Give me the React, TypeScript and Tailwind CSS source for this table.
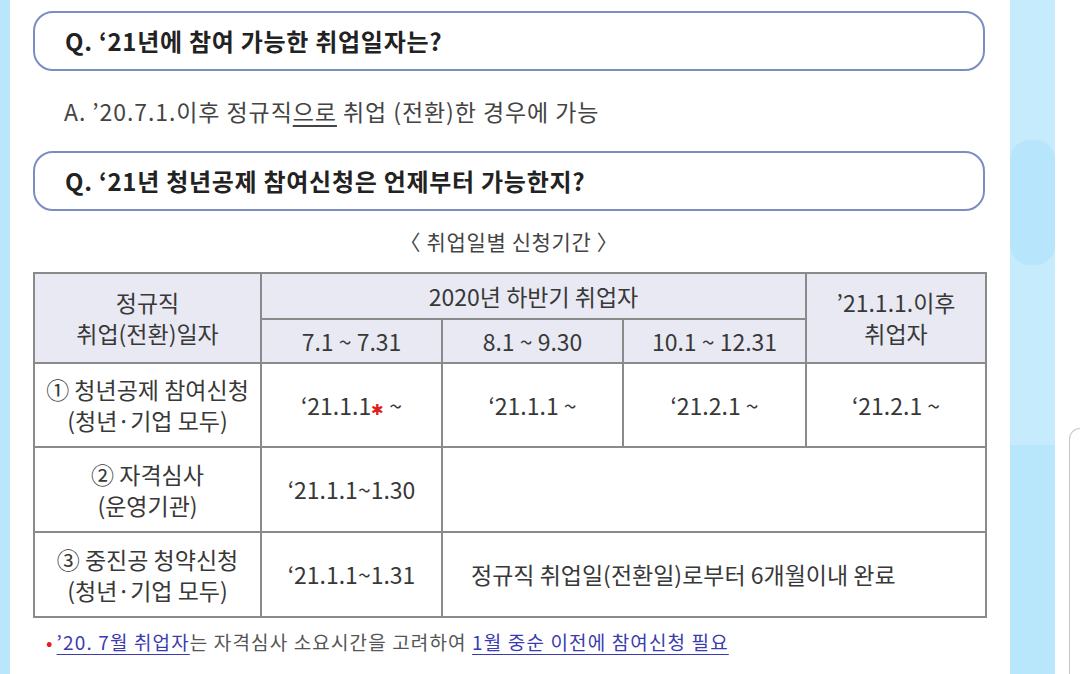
const KR = "font-['Noto_Sans_CJK_KR','Noto_Sans',sans-serif]";

function QBox({ children }: { children: React.ReactNode }) {
  return (
    <div className="h-[60px] rounded-[20px] border-2 border-[#7d8cc4] flex items-center pl-[30px]">
      <p className="text-[24px] font-bold text-[#222] tracking-[0.03em]">{children}</p>
    </div>
  );
}

function Two({ a, b }: { a: string; b: string }) {
  return (
    <div className="leading-[31px]">
      <div>{a}</div>
      <div>{b}</div>
    </div>
  );
}

export default function App() {
  const cell = "border-2 border-[#8a8a8a] text-center align-middle";
  return (
    <div className={`flex w-[1080px] h-[674px] bg-white overflow-hidden ${KR}`}>
      <div className="w-[10px] shrink-0 bg-[#b9e6fb]" />

      <main className="w-[1000px] shrink-0 pl-[23px] pr-[25px] pt-[11px] text-[#333]">
        <QBox>Q. ‘21년에 참여 가능한 취업일자는?</QBox>

        <div className="h-[80px] flex items-center pl-[31px] text-[23px] text-[#444] tracking-[0.04em]">
          <p>
            A. ’20.7.1.이후 정규직<span className="underline underline-offset-4">으로</span> 취업 (전환)한 경우에 가능
          </p>
        </div>

        <QBox>Q. ‘21년 청년공제 참여신청은 언제부터 가능한지?</QBox>

        <p className="h-[61px] flex items-center justify-center text-[21px] text-[#444] tracking-[0.03em]">
          〈 취업일별 신청기간 〉
        </p>

        <table className="w-[952px] border-collapse table-fixed text-[23px] text-[#383838]">
          <colgroup>
            <col className="w-[227px]" />
            <col className="w-[181px]" />
            <col className="w-[181px]" />
            <col className="w-[183px]" />
            <col className="w-[180px]" />
          </colgroup>
          <tbody>
            <tr className="h-[46px] bg-[#e9e9f3]">
              <td rowSpan={2} className={cell}>
                <Two a="정규직" b="취업(전환)일자" />
              </td>
              <td colSpan={3} className={cell}>2020년 하반기 취업자</td>
              <td rowSpan={2} className={cell}>
                <Two a="’21.1.1.이후" b="취업자" />
              </td>
            </tr>
            <tr className="h-[44px] bg-[#e9e9f3]">
              <td className={cell}>7.1 ~ 7.31</td>
              <td className={cell}>8.1 ~ 9.30</td>
              <td className={cell}>10.1 ~ 12.31</td>
            </tr>
            <tr className="h-[84px]">
              <td className={cell}>
                <Two a="① 청년공제 참여신청" b="(청년·기업 모두)" />
              </td>
              <td className={cell}>
                ‘21.1.1<span className="text-[#e02020] text-[15px] align-middle">✱</span> ~
              </td>
              <td className={cell}>‘21.1.1 ~</td>
              <td className={cell}>‘21.2.1 ~</td>
              <td className={cell}>‘21.2.1 ~</td>
            </tr>
            <tr className="h-[85px]">
              <td className={cell}>
                <Two a="② 자격심사" b="(운영기관)" />
              </td>
              <td className={cell}>‘21.1.1~1.30</td>
              <td colSpan={3} className={cell} />
            </tr>
            <tr className="h-[85px]">
              <td className={cell}>
                <Two a="③ 중진공 청약신청" b="(청년·기업 모두)" />
              </td>
              <td className={cell}>‘21.1.1~1.31</td>
              <td colSpan={3} className={`${cell} !text-left pl-[28px]`}>
                정규직 취업일(전환일)로부터 6개월이내 완료
              </td>
            </tr>
          </tbody>
        </table>

        <p className="mt-[10px] pl-[13px] text-[19px] text-[#555] tracking-[0.06em]">
          <span className="text-[#e02020] mr-[3px]">•</span>
          <span className="text-[#3b3bb0] underline underline-offset-4">’20. 7월 취업자</span>
          는 자격심사 소요시간을 고려하여{" "}
          <span className="text-[#3b3bb0] underline underline-offset-4">1월 중순 이전에 참여신청 필요</span>
        </p>
      </main>

      <div className="w-[45px] shrink-0 bg-[#c5ebfc] flex flex-col">
        <div className="h-[140px]" />
        <div className="h-[125px] rounded-[20px] bg-[#b7e5fb]" />
        <div className="h-[180px]" />
        <div className="flex-1 bg-[#b8e6fb]" />
      </div>

      <div className="flex-1 bg-white pl-[14px] pt-[428px]">
        <div className="h-[300px] rounded-tl-[12px] border-l border-t border-[#c8c8c8]" />
      </div>
    </div>
  );
}
